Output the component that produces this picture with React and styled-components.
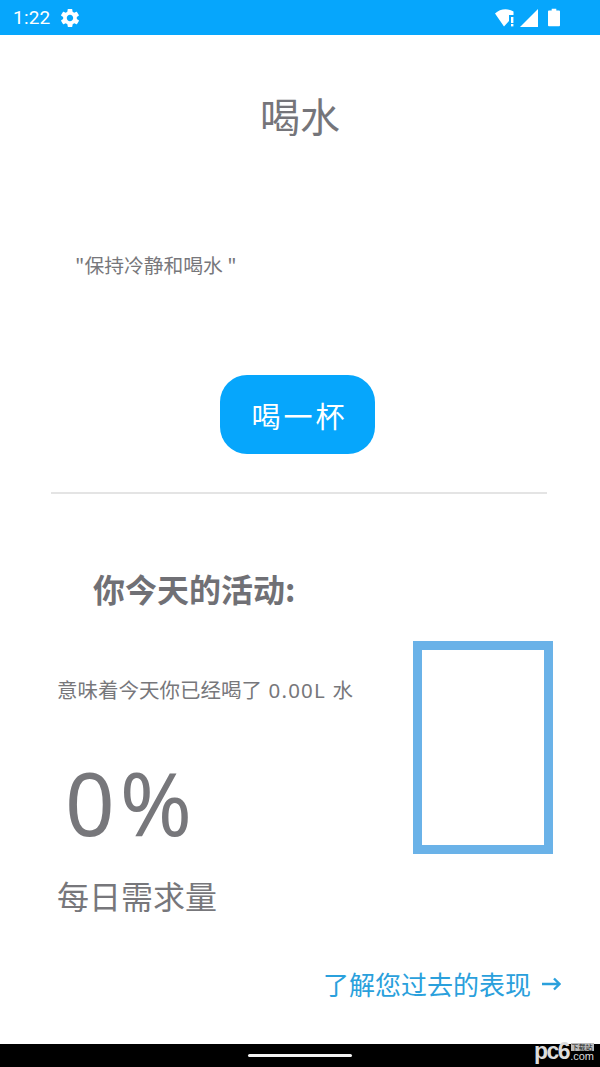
import React from "react";
import styled, { createGlobalStyle } from "styled-components";
import { IoMdSettings } from "react-icons/io";

const GlobalStyle = createGlobalStyle`
  html, body {
    margin: 0;
    padding: 0;
    background: #fff;
  }
  * {
    box-sizing: border-box;
  }
`;

const CJK = `"Noto Sans CJK SC", "Noto Sans", sans-serif`;

const Screen = styled.div`
  width: 600px;
  height: 1067px;
  display: flex;
  flex-direction: column;
  font-family: ${CJK};
  color: #77777b;
  overflow: hidden;
`;

const StatusBar = styled.div`
  height: 35px;
  flex: none;
  background: #06a6fc;
  color: #fff;
  display: flex;
  align-items: center;
  justify-content: space-between;
  padding: 0 40px 0 13px;
`;

const StatusGroup = styled.div`
  display: flex;
  align-items: center;
  gap: ${(props) => props.gap || 0}px;
`;

const Clock = styled.span`
  font-family: Roboto, sans-serif;
  font-size: 19px;
  line-height: 35px;
  letter-spacing: 0.2px;
`;

const Content = styled.div`
  flex: 1;
  display: flex;
  flex-direction: column;
`;

const Title = styled.h1`
  margin: 56px 0 0;
  height: 48px;
  font-size: 40px;
  line-height: 48px;
  font-weight: 400;
  text-align: center;
  color: #75757a;
`;

const Quote = styled.p`
  margin: 112px 0 0 75px;
  height: 28px;
  font-size: 19.8px;
  line-height: 28px;
  color: #77777b;
`;

const DrinkRow = styled.div`
  display: flex;
  justify-content: center;
  margin: 96px 5px 0 0;
`;

const DrinkButton = styled.button`
  width: 155px;
  height: 79px;
  padding: 0 0 0 4px;
  border: 0;
  border-radius: 27px;
  background: #06a6fc;
  color: #fff;
  font-family: ${CJK};
  font-size: 29px;
  letter-spacing: 3px;
`;

const Divider = styled.hr`
  height: 2px;
  margin: 38px 53px 0 51px;
  border: 0;
  background: #e4e4e4;
`;

const Heading = styled.h2`
  margin: 71px 0 0 93px;
  height: 46px;
  font-size: 32px;
  line-height: 46px;
  font-weight: 700;
  color: #707075;
`;

const Activity = styled.div`
  display: flex;
  justify-content: space-between;
  padding: 30px 47px 0 57px;
`;

const Stats = styled.div`
  display: flex;
  flex-direction: column;
`;

const Amount = styled.p`
  margin: 34px 0 0;
  height: 28px;
  font-size: 20.5px;
  line-height: 28px;
  white-space: nowrap;
`;

const AmountValue = styled.span`
  font-family: "Noto Sans", sans-serif;
  letter-spacing: 1.2px;
`;

const Percent = styled.div`
  margin: 51px 0 0 8px;
  height: 96px;
  font-family: "Noto Sans", sans-serif;
  font-size: 87px;
  line-height: 96px;
  font-weight: 400;
  letter-spacing: 5px;
  color: #77777b;
`;

const Need = styled.p`
  margin: 22px 0 0;
  height: 46px;
  font-size: 32px;
  line-height: 46px;
`;

const Gauge = styled.div`
  width: 140px;
  height: 213px;
  border: 9px solid #6ab2e8;
`;

const HistoryLink = styled.a`
  align-self: flex-end;
  margin: 47px 39px 0 0;
  height: 38px;
  display: flex;
  align-items: center;
  gap: 11px;
  font-size: 26px;
  line-height: 38px;
  color: #2aa0dc;
`;

const NavBar = styled.div`
  position: relative;
  height: 23px;
  flex: none;
  background: #000;
  display: flex;
  justify-content: center;
  padding-top: 10px;
`;

const HomePill = styled.div`
  width: 104px;
  height: 3px;
  border-radius: 2px;
  background: #f2f2f2;
`;

const Watermark = styled.div`
  position: absolute;
  right: 6px;
  bottom: 6px;
  display: flex;
  align-items: flex-end;
  gap: 1px;
  color: #dcdcdc;
  font-family: "Liberation Sans", sans-serif;
`;

const WatermarkMark = styled.span`
  font-size: 23px;
  line-height: 20px;
  font-weight: 700;
  letter-spacing: -1.5px;
`;

const WatermarkSide = styled.span`
  display: flex;
  flex-direction: column;
  align-items: center;
`;

const WatermarkTag = styled.span`
  font-family: ${CJK};
  font-size: 7px;
  line-height: 8px;
  padding: 0 1px;
  background: #bdbdbd;
  color: #222;
`;

const WatermarkDomain = styled.span`
  font-size: 11px;
  line-height: 10px;
`;

const WifiIcon = () => (
  <svg width="20" height="18" viewBox="0 0 20 18">
    <path d="M0 4.5 C5 -0.5 13 -1 18.5 2.5 L18.5 6 L14 6 L14 12 L9 17.5 Z" fill="#fff" />
    <rect x="16" y="8" width="2.4" height="6" fill="#fff" />
    <rect x="16" y="15" width="2.4" height="2.4" fill="#fff" />
  </svg>
);

const SignalIcon = () => (
  <svg width="18" height="18" viewBox="0 0 18 18">
    <path d="M0 18 L18 0 V18 Z" fill="#fff" />
  </svg>
);

const BatteryIcon = () => (
  <svg width="12" height="19" viewBox="0 0 13 19">
    <path d="M4 0 H9 V2 H12 A1 1 0 0 1 13 3 V18 A1 1 0 0 1 12 19 H1 A1 1 0 0 1 0 18 V3 A1 1 0 0 1 1 2 H4 Z" fill="#fff" />
  </svg>
);

const App = () => {
  return (
    <Screen>
      <GlobalStyle />
      <StatusBar>
        <StatusGroup gap={9}>
          <Clock>1:22</Clock>
          <IoMdSettings size={22} />
        </StatusGroup>
        <StatusGroup gap={10}>
          <StatusGroup gap={5}>
            <WifiIcon />
            <SignalIcon />
          </StatusGroup>
          <BatteryIcon />
        </StatusGroup>
      </StatusBar>

      <Content>
        <Title>喝水</Title>
        <Quote>"保持冷静和喝水 "</Quote>
        <DrinkRow>
          <DrinkButton>喝一杯</DrinkButton>
        </DrinkRow>
        <Divider />
        <Heading>你今天的活动:</Heading>
        <Activity>
          <Stats>
            <Amount>
              意味着今天你已经喝了<AmountValue> 0.00L </AmountValue>水
            </Amount>
            <Percent>0%</Percent>
            <Need>每日需求量</Need>
          </Stats>
          <Gauge />
        </Activity>
        <HistoryLink>
          了解您过去的表现
          <svg width="19" height="14" viewBox="0 0 19 14" fill="none" stroke="#2aa0dc" strokeWidth="2.4">
            <path d="M0 7 H17.5 M12 1.5 L17.5 7 L12 12.5" />
          </svg>
        </HistoryLink>
      </Content>

      <NavBar>
        <HomePill />
        <Watermark>
          <WatermarkMark>pc6</WatermarkMark>
          <WatermarkSide>
            <WatermarkTag>下载站</WatermarkTag>
            <WatermarkDomain>.com</WatermarkDomain>
          </WatermarkSide>
        </Watermark>
      </NavBar>
    </Screen>
  );
};

export default App;
